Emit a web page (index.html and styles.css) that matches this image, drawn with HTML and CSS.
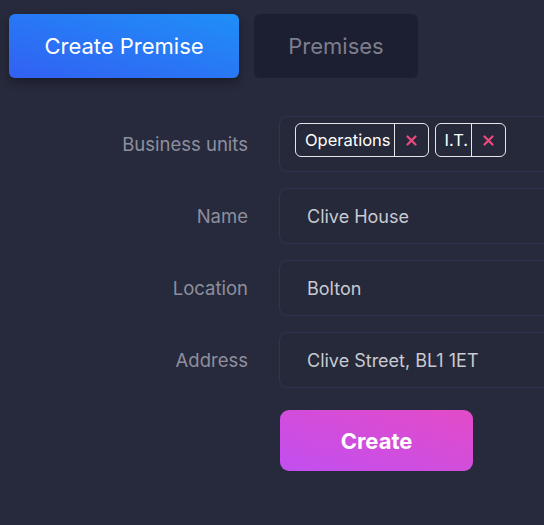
FILE: index.html
```
<!DOCTYPE html>
<html lang="en">
<head>
<meta charset="utf-8">
<title>Create Premise</title>
<link rel="stylesheet" href="styles.css">
</head>
<body>
<div class="page">
  <div class="tabs">
    <button class="tab tab-active">Create Premise</button>
    <button class="tab tab-idle">Premises</button>
  </div>
  <form class="form">
    <label class="label">Business units</label>
    <div class="field field-chips">
      <span class="chip"><span class="chip-text">Operations</span><span class="chip-x"><svg width="11" height="11" viewBox="0 0 11 11"><path d="M1.5 1.5 L9.5 9.5 M9.5 1.5 L1.5 9.5" stroke="#ee4a7f" stroke-width="2.2" stroke-linecap="round" fill="none"/></svg></span></span>
      <span class="chip"><span class="chip-text">I.T.</span><span class="chip-x"><svg width="11" height="11" viewBox="0 0 11 11"><path d="M1.5 1.5 L9.5 9.5 M9.5 1.5 L1.5 9.5" stroke="#ee4a7f" stroke-width="2.2" stroke-linecap="round" fill="none"/></svg></span></span>
    </div>
    <label class="label">Name</label>
    <div class="field">Clive House</div>
    <label class="label">Location</label>
    <div class="field">Bolton</div>
    <label class="label">Address</label>
    <div class="field">Clive Street, BL1 1ET</div>
    <span></span>
    <div class="actions"><button type="button" class="submit">Create</button></div>
  </form>
</div>
</body>
</html>
```
FILE: styles.css
```
html, body {
  margin: 0;
  padding: 0;
  overflow: hidden;
  background: #272a3c;
}
body {
  font-family: "Inter", "Noto Sans", sans-serif;
  color: #c9cad2;
}
.page {
  padding: 14px 0 0 9px;
}
.tabs {
  display: flex;
  gap: 15px;
}
.tab {
  height: 64px;
  border: none;
  border-radius: 6px;
  font-family: inherit;
  font-size: 22px;
  font-weight: 400;
  padding: 0;
}
.tab-active {
  width: 230px;
  color: #ffffff;
  background: linear-gradient(to top right, #3260f2, #1f8ff8);
  box-shadow: 0 4px 10px rgba(0, 0, 0, 0.35);
}
.tab-idle {
  width: 164px;
  color: #7c7e8c;
  background: #1c1f31;
}
.form {
  display: grid;
  grid-template-columns: 239px 330px;
  column-gap: 31px;
  row-gap: 16px;
  margin-top: 38px;
  align-items: center;
}
.label {
  text-align: right;
  color: #8d8f9d;
  font-size: 18.5px;
}
.field {
  box-sizing: border-box;
  height: 56px;
  border: 1px solid #2f3551;
  border-radius: 8px;
  background: #262939;
  display: flex;
  align-items: center;
  padding-left: 27px;
  font-size: 18px;
  color: #c9cad2;
}
.field-chips {
  align-items: flex-start;
  padding: 6px 0 0 15px;
  gap: 6px;
}
.chip {
  display: flex;
  align-items: stretch;
  height: 34px;
  box-sizing: border-box;
  border: 1px solid #e6e6ea;
  border-radius: 6px;
  color: #ffffff;
  font-size: 16.5px;
}
.chip-text {
  display: flex;
  align-items: center;
  padding: 0 3px 0 9px;
}
.chip-x {
  display: flex;
  align-items: center;
  justify-content: center;
  width: 33px;
  border-left: 1px solid #e6e6ea;
}
.actions {
  margin-top: 6px;
  padding-left: 1px;
}
.submit {
  width: 193px;
  height: 61px;
  border: none;
  border-radius: 9px;
  background: linear-gradient(to top right, #c14ff0, #e34bc7);
  color: #ffffff;
  font-family: inherit;
  font-size: 22px;
  font-weight: 700;
}
```
